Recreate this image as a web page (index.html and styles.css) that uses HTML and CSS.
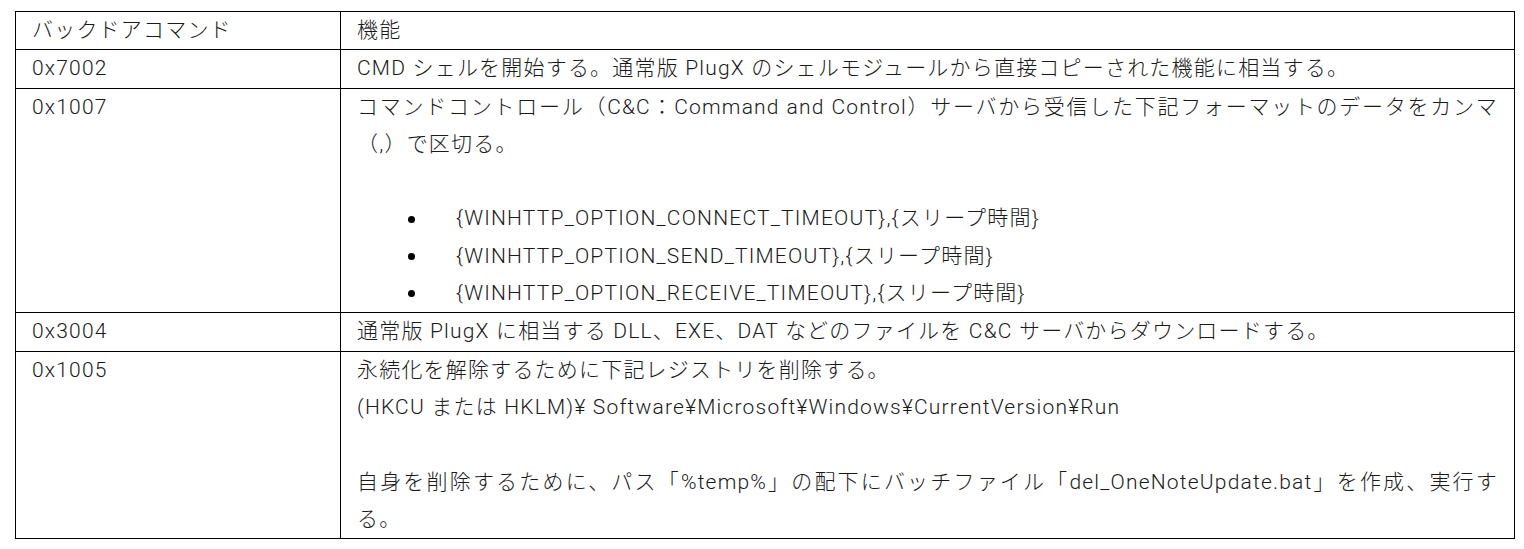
FILE: index.html
```html
<!DOCTYPE html>
<html lang="ja">
<head>
<meta charset="utf-8">
<title>バックドアコマンド</title>
<link rel="stylesheet" href="styles.css">
</head>
<body>
<div class="page">
  <table class="cmd-table">
    <colgroup>
      <col class="col-cmd">
      <col class="col-func">
    </colgroup>
    <tbody>
      <tr>
        <td class="cmd">バックドアコマンド</td>
        <td class="func">機能</td>
      </tr>
      <tr>
        <td class="cmd">0x7002</td>
        <td class="func">CMD シェルを開始する。通常版 PlugX のシェルモジュールから直接コピーされた機能に相当する。</td>
      </tr>
      <tr>
        <td class="cmd">0x1007</td>
        <td class="func">
          <span class="line just">コマンドコントロール（C&amp;C：Command and Control）サーバから受信した下記フォーマットのデータをカンマ</span>
          <span class="line">（,）で区切る。</span>
          <span class="line blank">&nbsp;</span>
          <ul class="bullets">
            <li>{WINHTTP_OPTION_CONNECT_TIMEOUT},{スリープ時間}</li>
            <li>{WINHTTP_OPTION_SEND_TIMEOUT},{スリープ時間}</li>
            <li>{WINHTTP_OPTION_RECEIVE_TIMEOUT},{スリープ時間}</li>
          </ul>
        </td>
      </tr>
      <tr>
        <td class="cmd">0x3004</td>
        <td class="func">通常版 PlugX に相当する DLL、EXE、DAT などのファイルを C&amp;C サーバからダウンロードする。</td>
      </tr>
      <tr>
        <td class="cmd">0x1005</td>
        <td class="func">
          <span class="line">永続化を解除するために下記レジストリを削除する。</span>
          <span class="line">(HKCU または HKLM)¥ Software¥Microsoft¥Windows¥CurrentVersion¥Run</span>
          <span class="line blank">&nbsp;</span>
          <span class="line just">自身を削除するために、パス「%temp%」の配下にバッチファイル「del_OneNoteUpdate.bat」を作成、実行す</span>
          <span class="line">る。</span>
        </td>
      </tr>
    </tbody>
  </table>
</div>
</body>
</html>
```

FILE: styles.css
```css
html, body {
  margin: 0;
  padding: 0;
  background: #ffffff;
}

.page {
  padding: 11px 0 0 15px;
}

.cmd-table {
  border-collapse: collapse;
  width: 1500px;
  table-layout: fixed;
  font-family: "Roboto", "Noto Sans CJK JP", sans-serif;
  font-weight: 300;
  font-size: 21px;
  letter-spacing: 1.2px;
  line-height: 37.3px;
  color: #1a1a1a;
}

.col-cmd {
  width: 325px;
}

.cmd-table td {
  border: 1px solid #000;
  padding: 0 16px;
  vertical-align: top;
}

.line {
  display: block;
  white-space: nowrap;
}

.just {
  text-align: justify;
  text-align-last: justify;
  white-space: normal;
}

.bullets {
  list-style: none;
  margin: 0;
  padding: 0 0 0 51px;
}

.bullets li {
  display: flex;
  align-items: center;
}

.bullets li::before {
  content: "";
  width: 7px;
  height: 7px;
  border-radius: 50%;
  background: #000;
  margin-right: 41px;
  flex: none;
}
```
